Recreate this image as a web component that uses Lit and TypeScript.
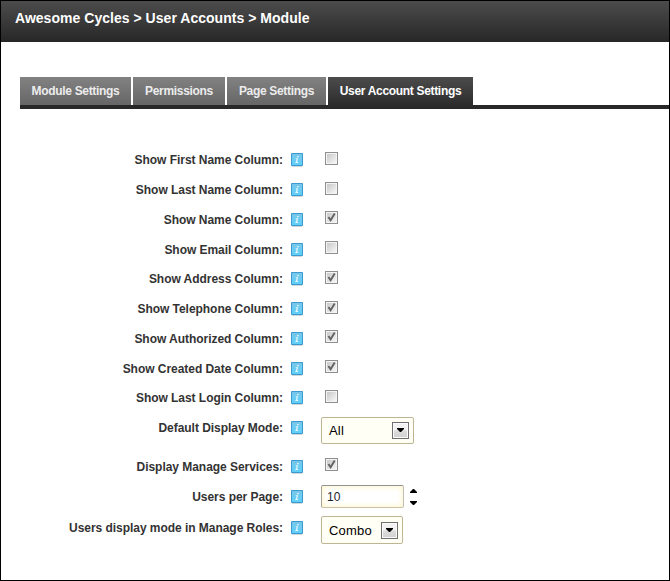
import { LitElement, html, css, svg } from "lit";
import { customElement, property } from "lit/decorators.js";

type Kind = "check" | "select" | "number";
interface Setting { label: string; kind: Kind; checked?: boolean; value?: string; size?: string; row?: string }

const SETTINGS: Setting[] = [
  { label: "Show First Name Column:", kind: "check" },
  { label: "Show Last Name Column:", kind: "check" },
  { label: "Show Name Column:", kind: "check", checked: true },
  { label: "Show Email Column:", kind: "check" },
  { label: "Show Address Column:", kind: "check", checked: true },
  { label: "Show Telephone Column:", kind: "check", checked: true },
  { label: "Show Authorized Column:", kind: "check", checked: true },
  { label: "Show Created Date Column:", kind: "check", checked: true },
  { label: "Show Last Login Column:", kind: "check" },
  { label: "Default Display Mode:", kind: "select", value: "All", size: "wide", row: "tall" },
  { label: "Display Manage Services:", kind: "check", checked: true, row: "roomy" },
  { label: "Users per Page:", kind: "number", value: "10", row: "roomy" },
  { label: "Users display mode in Manage Roles:", kind: "select", value: "Combo", size: "narrow" },
];

@customElement("help-icon")
export class HelpIcon extends LitElement {
  static styles = css`
    :host { display: block; width: 13px; height: 15px; }
    svg { display: block; }
  `;
  render() {
    return html`<svg width="13" height="15" viewBox="0 0 13 15">
      <defs>
        <linearGradient id="g" x1="0" y1="0" x2="0" y2="1">
          <stop offset="0" stop-color="#79c6ea" /><stop offset="1" stop-color="#5fd0fa" />
        </linearGradient>
      </defs>
      <rect x="1" y="13" width="10" height="1" fill="#d0d6da" />
      <rect x="0" y="0" width="12" height="13" rx=".8" fill="#3b9bd0" />
      <rect x="1" y="1" width="10" height="11" fill="url(#g)" />
      <path d="M6.2 3h1.5v1.2H6zM4.8 5.2h2.3L6.2 9h1v.9H4.3V9h.6l.7-2.9h-.9z" fill="#e6f6fd" />
    </svg>`;
  }
}

@customElement("check-box")
export class CheckBox extends LitElement {
  @property({ type: Boolean }) checked = false;
  static styles = css`
    :host { display: block; width: 13px; height: 13px; }
    svg { display: block; }
  `;
  render() {
    return html`<svg width="13" height="13" viewBox="0 0 13 13">
      <defs>
        <linearGradient id="g" x1="0" y1="0" x2="1" y2="1">
          <stop offset="0" stop-color="#c8c8c8" /><stop offset="1" stop-color="#f6f6f6" />
        </linearGradient>
      </defs>
      <rect x=".5" y=".5" width="12" height="12" fill="#f4f4f4" stroke="#8e8f8f" />
      <rect x="2" y="2" width="9" height="9" fill="url(#g)" />
      ${this.checked ? svg`<path d="M3.4 6 5.6 9.3 9.7 2.4" fill="none" stroke="#626262" stroke-width="1.9" />` : null}
    </svg>`;
  }
}

@customElement("drop-down")
export class DropDown extends LitElement {
  @property() value = "";
  static styles = css`
    :host {
      display: flex; box-sizing: border-box; height: 27px; align-items: center;
      justify-content: space-between; padding: 0 4px 0 7px;
      border: 1px solid #bdb593; border-radius: 2px; background: #fffff5;
      font-size: 13px; color: #000; letter-spacing: 0.2px;
    }
    .arrow {
      box-sizing: border-box; width: 17px; height: 17px; border: 1px solid #707070;
      display: flex; align-items: center; justify-content: center;
      box-shadow: inset 0 0 0 1px #fafafa;
      background: linear-gradient(#f2f2f2 45%, #dcdcdc 55%, #d0d0d0);
    }
    svg { display: block; }
  `;
  render() {
    return html`<span>${this.value}</span>
      <span class="arrow"><svg width="7" height="4" viewBox="0 0 7 4"><path d="M0 0h7v1L4 4H3L0 1z" fill="#000" /></svg></span>`;
  }
}

@customElement("number-field")
export class NumberField extends LitElement {
  @property() value = "";
  static styles = css`
    :host { display: flex; align-items: center; gap: 6px; }
    .field {
      box-sizing: border-box; width: 83px; height: 23px; padding: 0 5px; line-height: 22px;
      border: 1px solid #bdb593; border-color: #929292 #bdbdb5 #c9c3a6 #a5a294; border-radius: 2px;
      background: #fff; box-shadow: inset 0 0 6px #fff3bd; font-size: 12px; color: #1b2430;
    }
    .arrows { display: flex; flex-direction: column; gap: 8px; }
    svg { display: block; }
  `;
  render() {
    return html`<span class="field">${this.value}</span>
      <span class="arrows">
        <svg width="7" height="4" viewBox="0 0 7 4"><path d="M0 4V3L3 0h1l3 3v1z" /></svg>
        <svg width="7" height="4" viewBox="0 0 7 4"><path d="M0 0h7v1L4 4H3L0 1z" /></svg>
      </span>`;
  }
}

@customElement("app-root")
export class AppRoot extends LitElement {
  static styles = css`
    :host {
      display: block; box-sizing: border-box; height: 581px; border: 1px solid #000;
      background: #fff; font-family: "Liberation Sans", Arial, sans-serif; overflow: hidden;
    }
    header {
      height: 41px; box-sizing: border-box; padding: 0 14px; line-height: 35px;
      background: linear-gradient(#4c4c4c, #272727);
      color: #fff; font-size: 14px; font-weight: bold; white-space: nowrap; letter-spacing: 0.03px;
    }
    nav {
      margin: 35px 0 0 19px; display: flex; gap: 2px; height: 32px; box-sizing: border-box;
      border-bottom: 4px solid #282828;
    }
    .tab {
      box-sizing: border-box; height: 28px; line-height: 28px; text-align: center;
      background: linear-gradient(#828282, #666); color: #ececec;
      font-size: 12px; font-weight: bold; white-space: nowrap; letter-spacing: -0.32px;
    }
    .module { width: 111px; }
    .permissions { width: 92px; }
    .page { width: 99px; }
    .account { width: 145px; height: 32px; background: linear-gradient(#4c4c4c, #282828); color: #fff; }
    .form { padding-top: 36.3px; }
    .row { display: flex; align-items: flex-start; height: 29.78px; }
    .row.tall { height: 38.5px; }
    .row.roomy { height: 30.6px; }
    .label {
      width: 282px; text-align: right; font-size: 12px; font-weight: bold; color: #333;
      line-height: 14px; padding-top: 8px; white-space: nowrap; letter-spacing: -0.04px;
    }
    help-icon { margin: 8px 0 0 8px; }
    check-box { margin: 6.6px 0 0 21px; }
    drop-down { margin: 3.7px 0 0 17px; }
    drop-down.wide { width: 93px; }
    drop-down.narrow { width: 82px; height: 28px; margin-top: 3.2px; }
    number-field { margin: 2.9px 0 0 17px; }
  `;

  private control(s: Setting) {
    if (s.kind === "check") return html`<check-box ?checked=${s.checked}></check-box>`;
    if (s.kind === "select") return html`<drop-down class=${s.size} .value=${s.value}></drop-down>`;
    return html`<number-field .value=${s.value}></number-field>`;
  }

  render() {
    return html`
      <header>Awesome Cycles &gt; User Accounts &gt; Module</header>
      <nav>
        <span class="tab module">Module Settings</span>
        <span class="tab permissions">Permissions</span>
        <span class="tab page">Page Settings</span>
        <span class="tab account">User Account Settings</span>
      </nav>
      <div class="form">
        ${SETTINGS.map((s) => html`
          <div class="row ${s.row ?? ""}">
            <span class="label">${s.label}</span>
            <help-icon></help-icon>
            ${this.control(s)}
          </div>`)}
      </div>`;
  }
}
